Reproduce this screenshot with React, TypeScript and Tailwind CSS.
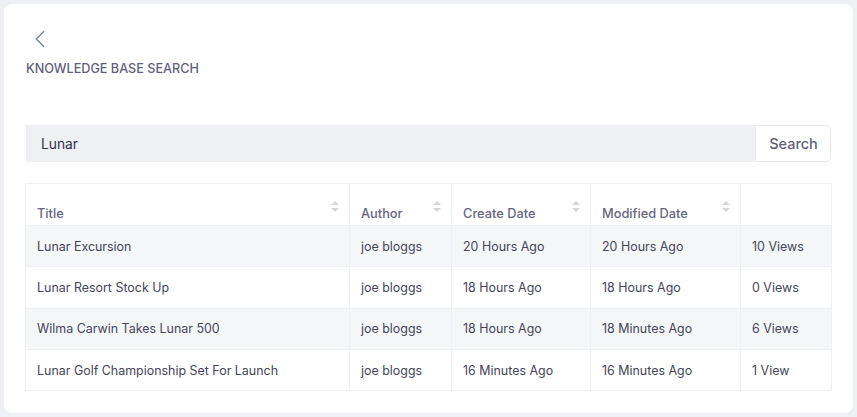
import { ChevronLeft } from "lucide-react";

const rows = [
  { title: "Lunar Excursion", author: "joe bloggs", created: "20 Hours Ago", modified: "20 Hours Ago", views: "10 Views" },
  { title: "Lunar Resort Stock Up", author: "joe bloggs", created: "18 Hours Ago", modified: "18 Hours Ago", views: "0 Views" },
  { title: "Wilma Carwin Takes Lunar 500", author: "joe bloggs", created: "18 Hours Ago", modified: "18 Minutes Ago", views: "6 Views" },
  { title: "Lunar Golf Championship Set For Launch", author: "joe bloggs", created: "16 Minutes Ago", modified: "16 Minutes Ago", views: "1 View" },
];

function SortIcon() {
  return (
    <svg width="8" height="11" viewBox="0 0 8 11" className="absolute right-[10px] top-[17px] fill-[#d5d6de]">
      <path d="M4 0 L8 4 L0 4 Z" />
      <path d="M4 11 L8 7 L0 7 Z" />
    </svg>
  );
}

function Th({ label, width }: { label: string; width: string }) {
  return (
    <th className={`relative h-[42px] ${width} border border-[#eff0f4] px-[11px] pb-[2px] align-bottom text-left text-[12.8px] font-medium text-[#66667f]`}>
      {label}
      <SortIcon />
    </th>
  );
}

export default function App() {
  return (
    <div className="h-[417px] w-[857px] bg-[#eff0f4] p-1 font-['Inter',sans-serif] antialiased">
      <div className="h-[409px] rounded-lg bg-white px-[22px] pt-[20px]">
        <button className="-ml-[1px] block text-[#6f85a3]">
          <ChevronLeft size={30} strokeWidth={1.1} />
        </button>
        <h1 className="mt-[5px] text-[12.65px] leading-5 font-medium text-[#5f5f7c]">KNOWLEDGE BASE SEARCH</h1>

        <div className="mt-[46px] flex h-[37px]">
          <div className="flex flex-1 items-center bg-[#eff0f4] pt-[1px] pl-[15px] text-[13.8px] text-[#33334a]">Lunar</div>
          <button className="w-[76px] rounded-r-[5px] border border-[#e9eaef] pl-[1px] text-[14.5px] font-medium text-[#5f5f7c]">Search</button>
        </div>

        <table className="mt-[21px] -ml-[1px] w-[807px] table-fixed border-collapse">
          <thead>
            <tr>
              <Th label="Title" width="w-[324px]" />
              <Th label="Author" width="w-[102px]" />
              <Th label="Create Date" width="w-[139px]" />
              <Th label="Modified Date" width="w-[150px]" />
              <th className="border border-[#eff0f4]" />
            </tr>
          </thead>
          <tbody>
            {rows.map((row, i) => (
              <tr key={row.title} className={i % 2 === 0 ? "bg-[#f5f6f8]" : "bg-white"}>
                {[row.title, row.author, row.created, row.modified, row.views].map((cell, j) => (
                  <td key={j} className="h-[41.25px] border border-[#eff0f4] px-[11px] pt-[2px] text-[12.45px] whitespace-nowrap text-[#45455a]">
                    {cell}
                  </td>
                ))}
              </tr>
            ))}
          </tbody>
        </table>
      </div>
    </div>
  );
}
